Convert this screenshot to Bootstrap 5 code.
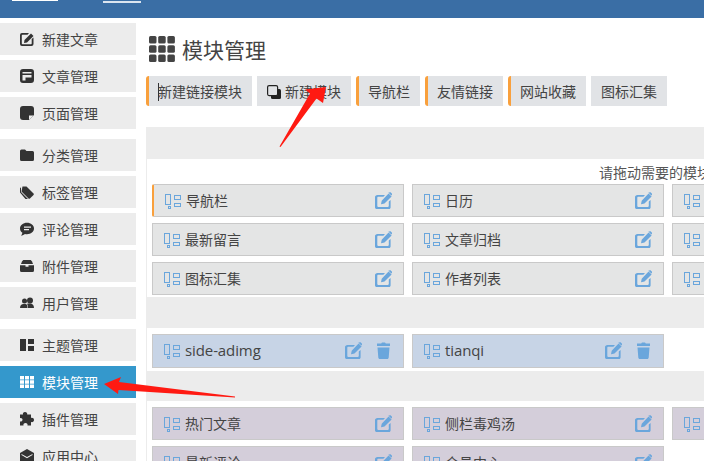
<!DOCTYPE html>
<html lang="zh"><head><meta charset="utf-8">
<link href="https://cdn.jsdelivr.net/npm/bootstrap@5.3.0/dist/css/bootstrap.min.css" rel="stylesheet">
<style>
html,body{width:704px;height:461px;overflow:hidden;margin:0;background:#fff}
body{font-family:"Noto Sans CJK SC","Open Sans",sans-serif;font-size:14px;color:#444;position:relative}
.topbar{height:18px;background:#3a6ea5;position:relative}
.topbar-logo{width:46px;height:1px;background:#fff;margin-left:12px}
.topbar-txt{width:38px;height:2px;margin-left:103px;background:#dbe5f0}
.side-col{width:136px;flex:none;padding-top:5px}
.side-link{height:32px;background:#ececec;color:#444;padding:0 0 0 20px;gap:8px;margin-bottom:5px;line-height:32px;text-decoration:none}
.side-link svg{width:14px;height:14px;flex:none;fill:#333}
.side-link.on{background:#3498cc;color:#fff}
.side-link.on svg{fill:#fff}
.side-gap{margin-top:5px}
.main-col{padding-left:10px;width:900px;flex:none}
.page-title{font-size:21px;line-height:26px;font-weight:400;margin:0;padding:18px 0 0 3px;gap:7px;color:#444}
.page-title svg{width:26px;height:26px;fill:#444}
.tool-row{gap:5px;margin-top:14px}
.tool-btn{height:30px;background:#e1e3e6;border:0;border-radius:0;color:#444;font-size:14px;padding:0 10px;line-height:30px;white-space:nowrap}
.tool-btn.mark-o{border-left:3px solid #f9a03c;border-radius:3px 0 0 3px;padding-left:9px}
.tool-btn svg{width:14px;height:14px;margin-right:4px;vertical-align:-2px}
.panel-box{background:#ececec;margin-top:21px;padding:32px 0 0 1px;width:700px}
.white-box{background:#fff;padding:0 0 2px 5px;width:700px}
.hint{height:25px;line-height:26px;padding-left:447px;white-space:nowrap;color:#555}
.mod-grid{display:grid;grid-template-columns:repeat(3,252px);gap:6px 8px;align-items:start}
.mod-item{height:33px;background:#e4e5e5;border:1px solid #c9c9c9;padding:0 11px;gap:5px;line-height:31px;color:#444;white-space:nowrap}
.mod-item.mark-o{border-left:2px solid #f9a03c;border-radius:2px 0 0 2px}
.mod-item.blue{background:#c7d4e6;height:34px;padding-bottom:1px}
.mod-item.purple{background:#d4ceda}
.grip{width:16px;height:19px;flex:none;fill:none;stroke:#6aa6dc;stroke-width:1}
.act{width:17px;height:17px;flex:none;fill:#6aa6dc}
.acts{margin-left:auto;gap:13px;margin-right:0}
.sect-a{margin-top:31px;padding-top:6px;padding-bottom:3px}
.sect-b{margin-top:30px;padding-top:6px}
.latin{font-family:"Open Sans","Noto Sans CJK SC",sans-serif;font-size:15px;letter-spacing:-.1px}
.arrow-layer{position:absolute;left:0;top:0;width:704px;height:461px;pointer-events:none}
.caret-bar{display:inline-block;width:1px;height:18px;background:#333;margin-right:-1px;vertical-align:-4px}
</style></head><body>
<svg width="0" height="0" class="d-block position-absolute">
<symbol id="i-grip"><rect x=".5" y="3.500" width="5" height="10"/><rect x="3.500" y="15.500" width="2" height="2"/><rect x="9.500" y="4.500" width="6" height="4"/><rect x="9.500" y="12.500" width="6" height="3"/></symbol>
<symbol id="i-edit" viewBox="0 0 17 17"><path d="M2.500 3H10L8.400 4.800H3a.9.9 0 0 0-.7.700v8.600c0 .4.300.8.700.8h10c.4 0 .8-.4.800-.8V9.500L15.600 8v7.500c0 .8-.7 1.500-1.500 1.500H1.600C.8 17 0 16.300 0 15.500V5c0-1 1-2 2.500-2z"/><path d="M13.600 1.500l3 3L9.500 11.500 6 12.300l.7-3.600zM14.400.6c.4-.4 1-.4 1.400 0l1 1c.3.400.3 1 0 1.300l-.5.600-3-3z"/></symbol>
<symbol id="i-trash" viewBox="0 0 17 17"><path d="M2.500 5.500h12l-.8 10c0 .8-.7 1.500-1.500 1.500H4.800c-.8 0-1.500-.7-1.500-1.500zM6.200 1.500L7 .4h3l.8 1.100H15v2.500H2V1.500z"/></symbol>
</svg>

<div class="topbar"><div class="topbar-logo"></div><div class="topbar-txt"></div></div>

<div class="d-flex">
<nav class="side-col nav flex-column flex-nowrap">
<a class="side-link d-flex align-items-center" href="#"><svg viewBox="0 0 14 14"><path d="M2 1h7L7.500 2.800H2.500a.7.7 0 0 0-.7.700v8c0 .4.300.7.700.7h8.500c.4 0 .7-.3.700-.7V7L13.500 5.500V12a2 2 0 0 1-2 2H2a2 2 0 0 1-2-2V3a2 2 0 0 1 2-2z"/><path d="M11 1.500l2.500 2.500L7 10.500l-3 .6.500-3z"/></svg>新建文章</a>
<a class="side-link d-flex align-items-center" href="#"><svg viewBox="0 0 14 14"><path fill-rule="evenodd" d="M3 0h8a3 3 0 0 1 3 3v8a3 3 0 0 1-3 3H3a3 3 0 0 1-3-3V3a3 3 0 0 1 3-3zm-.5 3v1.500h9V3zm0 3v5.500h3V8.500h6V6z"/></svg>文章管理</a>
<a class="side-link d-flex align-items-center" href="#"><svg viewBox="0 0 14 14"><path d="M3 0h8a3 3 0 0 1 3 3v6l-5 5H3a3 3 0 0 1-3-3V3a3 3 0 0 1 3-3z"/><path fill="#eee" d="M9 9.500h4.500L9 14z"/></svg>页面管理</a>
<a class="side-link side-gap d-flex align-items-center" href="#"><svg viewBox="0 0 14 14"><path d="M0 3a1.500 1.500 0 0 1 1.500-1.500H5L6.500 3h6A1.500 1.500 0 0 1 14 4.500v7a1.500 1.500 0 0 1-1.500 1.500h-11A1.500 1.500 0 0 1 0 11.500z"/></svg>分类管理</a>
<a class="side-link d-flex align-items-center" href="#"><svg viewBox="0 0 14 14"><path d="M2.500 1.500h4L13.500 8.500a1 1 0 0 1 0 1.400L9.900 13.500a1 1 0 0 1-1.400 0L1.500 6.500z"/><path d="M0 3.200l1 -1v4.800l7 7-.8.800a1 1 0 0 1-1.200-.2L0 7.500z"/></svg>标签管理</a>
<a class="side-link d-flex align-items-center" href="#"><svg viewBox="0 0 14 14"><path fill-rule="evenodd" d="M7 .8c3.900 0 7 2.500 7 5.700s-3.100 5.700-7 5.700c-.8 0-1.400 0-2-.2-1 .9-2.500 1.500-4 1.500.8-.7 1.300-1.700 1.400-2.700C.9 9.800 0 8.200 0 6.500 0 3.300 3.100.8 7 .8zM4 4.500v1.200h7V4.500zm0 2.600v1.200h5V7.100z"/></svg>评论管理</a>
<a class="side-link d-flex align-items-center" href="#"><svg viewBox="0 0 14 14"><path d="M4 1h6c1 0 1.500.6 2 1.500L13 5H1l1-2.500C2.500 1.600 3 1 4 1z"/><path d="M0 6.300h5.500v1.500h3V6.300H14v5.200A1.500 1.500 0 0 1 12.500 13h-11A1.500 1.500 0 0 1 0 11.500z"/></svg>附件管理</a>
<a class="side-link d-flex align-items-center" href="#"><svg viewBox="0 0 14 14"><circle cx="4.500" cy="5" r="2.500"/><circle cx="10" cy="4.500" r="3"/><path d="M0 12c0-2.500 1.500-4 3.500-4h2C7 8 7.500 10 7.500 12zM8 12c0-2-.3-3-1-4.200.7-.3 1.500-.3 3-.3 2.500 0 4 1.500 4 4.500z"/></svg>用户管理</a>
<a class="side-link side-gap d-flex align-items-center" href="#"><svg viewBox="0 0 14 14"><path d="M0 1h6v12H0zM8 1h6v5H8zM8 8h6v5H8z"/></svg>主题管理</a>
<a class="side-link on d-flex align-items-center" href="#"><svg viewBox="0 0 14 14"><path d="M0 1h4v3.500H0zM5 1h4v3.500H5zM10 1h4v3.500h-4zM0 5.300h4v3.500H0zM5 5.300h4v3.500H5zM10 5.300h4v3.500h-4zM0 9.500h4V13H0zM5 9.500h4V13H5zM10 9.500h4V13h-4z"/></svg>模块管理</a>
<a class="side-link d-flex align-items-center" href="#"><svg viewBox="0 0 14 14"><path d="M5 0c1.500 0 2.500 1 2.200 2.500H11V6c1.500-.5 3 .3 3 2s-1.500 2.500-3 2v3.500H7.500c.4-1.500-.5-2.500-2-2.500s-2.500 1-2 2.500H0V9.500c1.300.4 2.500-.4 2.500-1.700S1.300 5.700 0 6.200V2.500h3C2.500 1 3.500 0 5 0z"/></svg>插件管理</a>
<a class="side-link d-flex align-items-center" href="#"><svg viewBox="0 0 14 14"><path d="M7 0l7 4v8a2 2 0 0 1-2 2H2a2 2 0 0 1-2-2V4z"/><path fill="#eee" d="M1.500 5L7 8l5.500-3v1L7 9.200 1.500 6z"/></svg>应用中心</a>
</nav>

<main class="main-col">
<h1 class="page-title d-flex align-items-center"><svg viewBox="0 0 26 26"><rect x="0" y="0" width="7.500" height="7.500" rx="1.500"/><rect x="9.200" y="0" width="7.500" height="7.500" rx="1.500"/><rect x="18.400" y="0" width="7.500" height="7.500" rx="1.500"/><rect x="0" y="9.200" width="7.500" height="7.500" rx="1.500"/><rect x="9.200" y="9.200" width="7.500" height="7.500" rx="1.500"/><rect x="18.400" y="9.200" width="7.500" height="7.500" rx="1.500"/><rect x="0" y="18.400" width="7.500" height="7.500" rx="1.500"/><rect x="9.200" y="18.400" width="7.500" height="7.500" rx="1.500"/><rect x="18.400" y="18.400" width="7.500" height="7.500" rx="1.500"/></svg>模块管理</h1>

<div class="tool-row d-flex">
<button class="tool-btn mark-o"><span class="caret-bar"></span>新建链接模块</button>
<button class="tool-btn"><svg viewBox="0 0 14 14"><rect x="4" y="4" width="10" height="10" rx="1.500" fill="#222"/><rect x=".6" y=".6" width="10" height="10" rx="1.500" fill="#e1e3e6" stroke="#222" stroke-width="1.200"/></svg>新建模块</button>
<button class="tool-btn mark-o">导航栏</button>
<button class="tool-btn mark-o">友情链接</button>
<button class="tool-btn mark-o">网站收藏</button>
<button class="tool-btn">图标汇集</button>
</div>

<section class="panel-box">
<div class="white-box">
<div class="hint">请拖动需要的模块</div>
<div class="mod-grid">
<div class="mod-item mark-o d-flex align-items-center"><svg class="grip"><use href="#i-grip"/></svg>导航栏<span class="acts d-flex"><svg class="act"><use href="#i-edit"/></svg></span></div>
<div class="mod-item d-flex align-items-center"><svg class="grip"><use href="#i-grip"/></svg>日历<span class="acts d-flex"><svg class="act"><use href="#i-edit"/></svg></span></div>
<div class="mod-item d-flex align-items-center"><svg class="grip"><use href="#i-grip"/></svg></div>
<div class="mod-item d-flex align-items-center"><svg class="grip"><use href="#i-grip"/></svg>最新留言<span class="acts d-flex"><svg class="act"><use href="#i-edit"/></svg></span></div>
<div class="mod-item d-flex align-items-center"><svg class="grip"><use href="#i-grip"/></svg>文章归档<span class="acts d-flex"><svg class="act"><use href="#i-edit"/></svg></span></div>
<div class="mod-item d-flex align-items-center"><svg class="grip"><use href="#i-grip"/></svg></div>
<div class="mod-item d-flex align-items-center"><svg class="grip"><use href="#i-grip"/></svg>图标汇集<span class="acts d-flex"><svg class="act"><use href="#i-edit"/></svg></span></div>
<div class="mod-item d-flex align-items-center"><svg class="grip"><use href="#i-grip"/></svg>作者列表<span class="acts d-flex"><svg class="act"><use href="#i-edit"/></svg></span></div>
<div class="mod-item d-flex align-items-center"><svg class="grip"><use href="#i-grip"/></svg></div>
</div>
</div>
<div class="white-box sect-a">
<div class="mod-grid">
<div class="mod-item blue d-flex align-items-center"><svg class="grip"><use href="#i-grip"/></svg><span class="latin">side-adimg</span><span class="acts d-flex"><svg class="act"><use href="#i-edit"/></svg><svg class="act"><use href="#i-trash"/></svg></span></div>
<div class="mod-item blue d-flex align-items-center"><svg class="grip"><use href="#i-grip"/></svg><span class="latin">tianqi</span><span class="acts d-flex"><svg class="act"><use href="#i-edit"/></svg><svg class="act"><use href="#i-trash"/></svg></span></div>
</div>
</div>
<div class="white-box sect-b">
<div class="mod-grid">
<div class="mod-item purple d-flex align-items-center"><svg class="grip"><use href="#i-grip"/></svg>热门文章<span class="acts d-flex"><svg class="act"><use href="#i-edit"/></svg></span></div>
<div class="mod-item purple d-flex align-items-center"><svg class="grip"><use href="#i-grip"/></svg>侧栏毒鸡汤<span class="acts d-flex"><svg class="act"><use href="#i-edit"/></svg></span></div>
<div class="mod-item purple d-flex align-items-center"><svg class="grip"><use href="#i-grip"/></svg></div>
<div class="mod-item purple d-flex align-items-center"><svg class="grip"><use href="#i-grip"/></svg>最新评论<span class="acts d-flex"><svg class="act"><use href="#i-edit"/></svg></span></div>
<div class="mod-item purple d-flex align-items-center"><svg class="grip"><use href="#i-grip"/></svg>会员中心<span class="acts d-flex"><svg class="act"><use href="#i-edit"/></svg></span></div>
</div>
</div>
</section>
</main>
</div>

<svg class="arrow-layer" viewBox="0 0 704 461"><path fill="#ff1a12" d="M326 87L323 103 316.500 98.500 280.500 147 279.500 146.500 310 93.500 305 89.500z"/><path fill="#ff1a12" d="M104 384L121 377 119 382 235 396.500 235 397.500 118.500 390 118 394z"/></svg>
<script src="https://cdn.jsdelivr.net/npm/bootstrap@5.3.0/dist/js/bootstrap.bundle.min.js"></script>
</body></html>
